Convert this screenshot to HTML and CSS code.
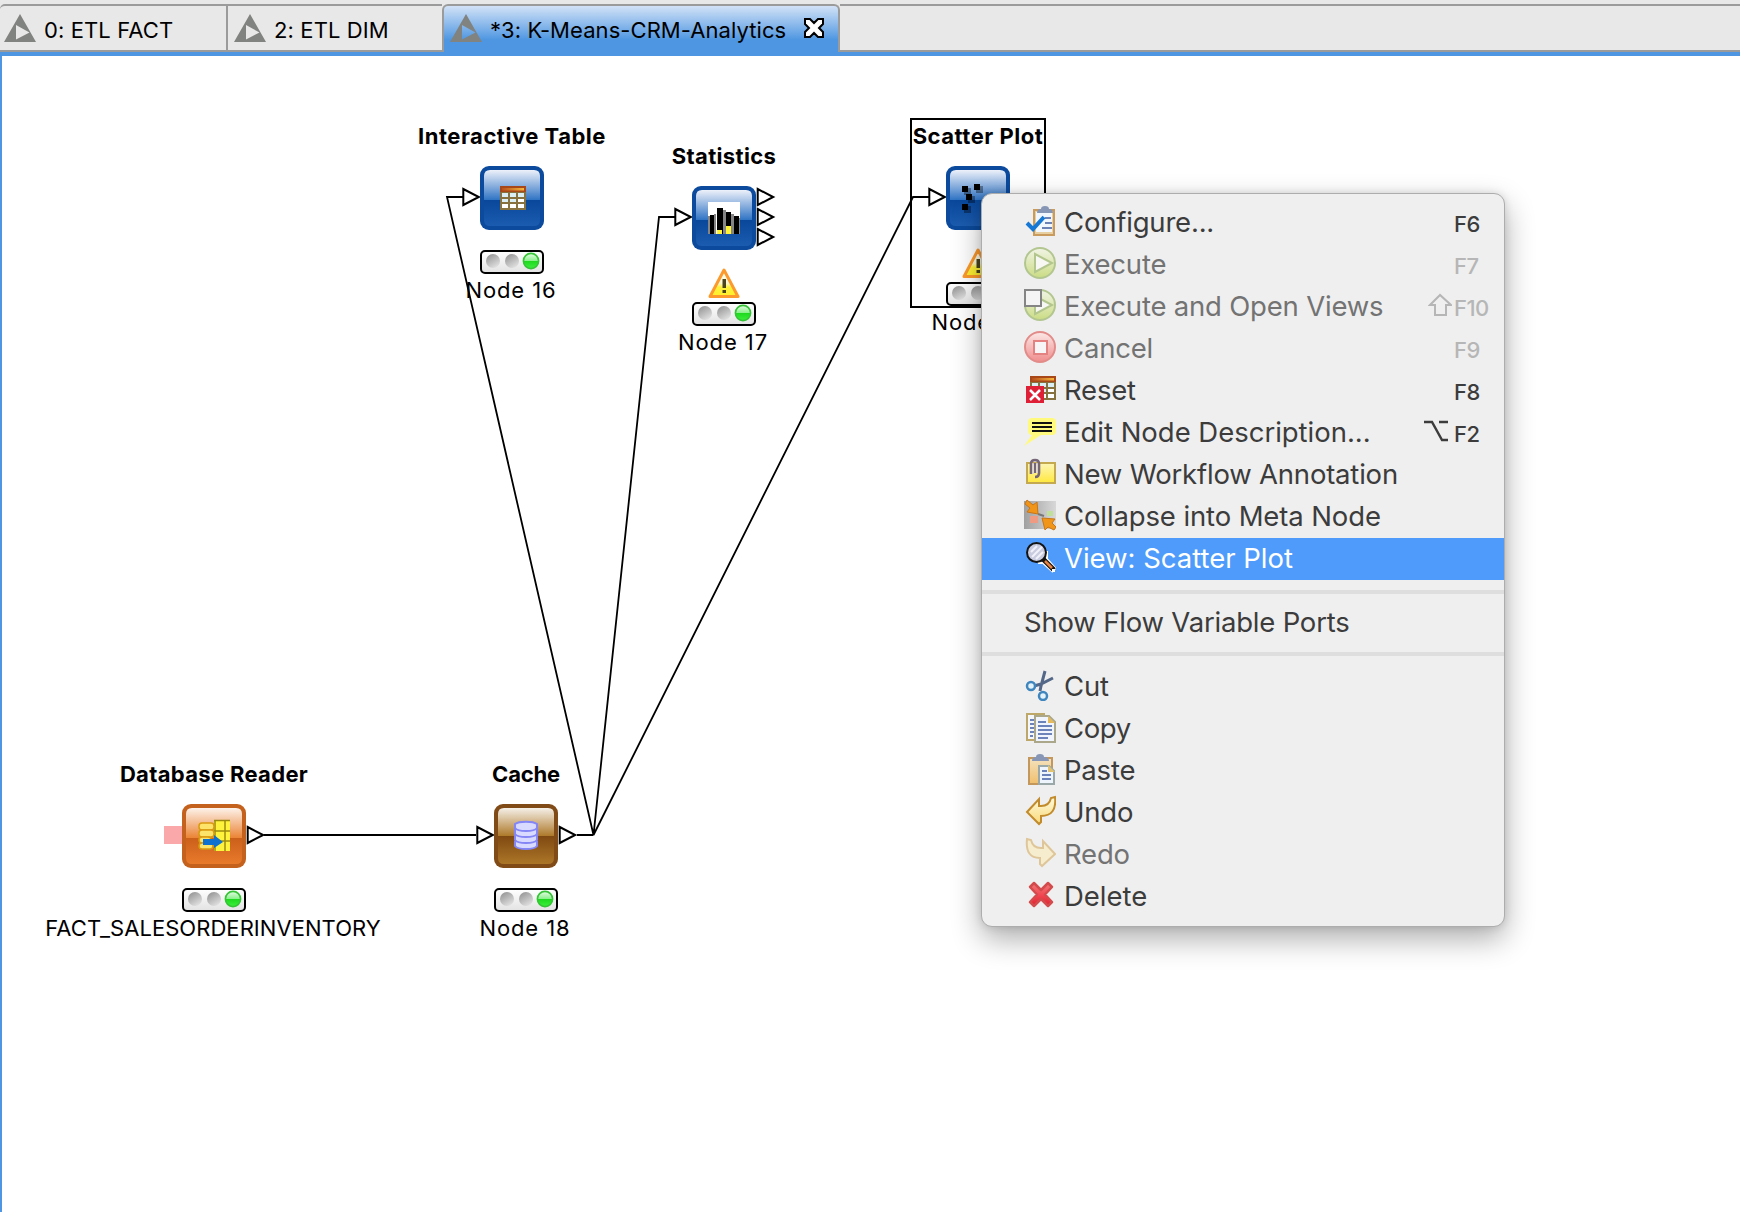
FILE: index.html
```html
<!DOCTYPE html>
<html lang="en">
<head>
<meta charset="utf-8">
<title>K-Means-CRM-Analytics</title>
<link rel="stylesheet" href="styles.css">
</head>
<body>
<svg class="defs" width="0" height="0" aria-hidden="true">
  <defs>
    <linearGradient id="blueTop" x1="0" y1="0" x2="0" y2="1"><stop offset="0" stop-color="#edf1fa"/><stop offset="1" stop-color="#2f73c4"/></linearGradient>
    <linearGradient id="blueBot" x1="0" y1="0" x2="0" y2="1"><stop offset="0" stop-color="#08479a"/><stop offset="1" stop-color="#1c5cb0"/></linearGradient>
    <linearGradient id="orangeTop" x1="0" y1="0" x2="0" y2="1"><stop offset="0" stop-color="#fdf2ea"/><stop offset="1" stop-color="#eb8334"/></linearGradient>
    <linearGradient id="orangeBot" x1="0" y1="0" x2="0" y2="1"><stop offset="0" stop-color="#cb601b"/><stop offset="1" stop-color="#e87a2b"/></linearGradient>
    <linearGradient id="brownTop" x1="0" y1="0" x2="0" y2="1"><stop offset="0" stop-color="#f5f0e8"/><stop offset="1" stop-color="#ae792a"/></linearGradient>
    <linearGradient id="brownBot" x1="0" y1="0" x2="0" y2="1"><stop offset="0" stop-color="#7f4912"/><stop offset="1" stop-color="#ac7628"/></linearGradient>
    <linearGradient id="tableHead"><stop offset="0" stop-color="#b8501c"/><stop offset="1" stop-color="#f5b73a"/></linearGradient>
    <linearGradient id="lampOff" x1="0" y1="0" x2=".6" y2="1"><stop offset="0" stop-color="#8d8d8d"/><stop offset="1" stop-color="#dedede"/></linearGradient>
    <linearGradient id="lampBox" x1="0" y1="0" x2="0" y2="1"><stop offset="0" stop-color="#fff"/><stop offset="1" stop-color="#e2e2e2"/></linearGradient>
    <linearGradient id="lampOn" x1="0" y1="0" x2="0" y2="1"><stop offset="0" stop-color="#e6fbe6"/><stop offset=".48" stop-color="#8df08d"/><stop offset=".52" stop-color="#1fd91f"/><stop offset="1" stop-color="#3df03d"/></linearGradient>
    <linearGradient id="warn" x1="0" y1="0" x2="0" y2="1"><stop offset="0" stop-color="#fff"/><stop offset=".5" stop-color="#fdf9d0"/><stop offset=".65" stop-color="#fff23a"/><stop offset="1" stop-color="#ffef2c"/></linearGradient>
    <linearGradient id="greenBall" x1="0" y1="0" x2="0" y2="1"><stop offset="0" stop-color="#f1f4e6"/><stop offset="1" stop-color="#cadc83"/></linearGradient>
    <linearGradient id="redBall" x1="0" y1="0" x2="0" y2="1"><stop offset="0" stop-color="#fbe9e7"/><stop offset="1" stop-color="#f08c8c"/></linearGradient>
    <linearGradient id="note" x1="0" y1="0" x2="0" y2="1"><stop offset="0" stop-color="#fdf6b8"/><stop offset="1" stop-color="#ffe83c"/></linearGradient>
    <linearGradient id="gold" x1="0" y1="0" x2="0" y2="1"><stop offset="0" stop-color="#fffbe0"/><stop offset="1" stop-color="#f9d978"/></linearGradient>
    <linearGradient id="board" x1="0" y1="0" x2="0" y2="1"><stop offset="0" stop-color="#f3e2bf"/><stop offset="1" stop-color="#f0bf6c"/></linearGradient>
    <linearGradient id="cross" x1="0" y1="0" x2="0" y2="1"><stop offset="0" stop-color="#f07a78"/><stop offset=".5" stop-color="#f14a55"/><stop offset="1" stop-color="#e0202e"/></linearGradient>
    <linearGradient id="meta" x1="0" y1="0" x2="1" y2="0"><stop offset="0" stop-color="#a0a0a0"/><stop offset="1" stop-color="#d8d8d8"/></linearGradient>

    <symbol id="tri" viewBox="0 0 32 28"><path fill="#80837f" fill-rule="evenodd" d="M16 0 32 28H0zM12 11v14.500L25.500 18.500z"/></symbol>
    <symbol id="lights" viewBox="0 0 64 24">
      <rect x="1" y="1" width="62" height="22" rx="4" fill="url(#lampBox)" stroke="#000" stroke-width="2"/>
      <circle cx="13" cy="11" r="7" fill="url(#lampOff)"/><circle cx="32" cy="11" r="7" fill="url(#lampOff)"/>
      <circle cx="51" cy="11" r="7.600" fill="url(#lampOn)" stroke="#35c435" stroke-width="1.600"/>
    </symbol>
    <symbol id="warning" viewBox="0 0 32 30"><path d="M16 2 30 28.500H2z" fill="url(#warn)" stroke="#fd9a2d" stroke-width="3" stroke-linejoin="round"/><path d="M14.500 11h3.500v9h-3.500zM14.500 22h3.500v3h-3.500z" fill="#4a4420"/></symbol>
    <symbol id="grid" viewBox="0 0 26 24"><path fill="#87713f" d="M0 0h26v24H0z"/><path fill="#a84718" d="M0 0h26v6H0z"/><path fill="url(#tableHead)" d="M2 2h22v2.500H2z"/><path fill="#d9eef5" d="M2 7h6v4H2zM10 7h6v4h-6zM18 7h6v4h-6zM2 13h6v3H2zM10 13h6v3h-6z"/><path fill="#fff" d="M18 13h6v3h-6zM2 18h6v4H2zM10 18h6v4h-6zM18 18h6v4h-6z"/></symbol>
  </defs>
</svg>

<header class="tabs">
  <div class="tab tab-first"><svg class="tab-icon"><use href="#tri"/></svg><span class="t0">0: ETL FACT</span></div>
  <div class="tab tab-second"><svg class="tab-icon"><use href="#tri"/></svg><span class="t1">2: ETL DIM</span></div>
  <div class="tab tab-active"><svg class="tab-icon"><use href="#tri"/></svg><span class="t2">*3: K-Means-CRM-Analytics</span>
    <svg class="tab-close" viewBox="0 0 20 20"><path d="M1 1h5l4 4 4-4h5v5l-4 4 4 4v5h-5l-4-4-4 4H1v-5l4-4-4-4z" fill="#fff" stroke="#000" stroke-width="2"/></svg></div>
  <div class="tab-rest"></div>
</header>

<main class="canvas">
  <svg class="wires" width="1738" height="1156" viewBox="2 56 1738 1156">
    <g fill="none" stroke="#000" stroke-width="2">
      <path d="M264 835H476M577 835H593.500"/>
      <path d="M593.500 835 447 197H463M593.500 835 659 217H675M593.500 835 913 197H929" stroke-width="1.800"/>
    </g>
    <path fill="#fba8aa" d="M164 826h18v18h-18z"/>
    <g fill="#fff" stroke="#000" stroke-width="2">
      <path d="M463.300 189v16l15.500-8zM675.300 209v16l15.500-8zM929.300 189v16l15.500-8zM477.300 827v16l15.500-8z"/>
      <path d="M247.700 827v16l15.500-8zM559.700 827v16l15.500-8zM757.700 189v16l15.500-8zM757.700 209v16l15.500-8zM757.700 229v16l15.500-8z"/>
    </g>
  </svg>
  <div class="selection"></div>

  <section class="node n-table">
    <h2 class="wide">Interactive Table</h2>
    <svg class="tile" viewBox="0 0 64 64"><rect width="64" height="64" rx="9" fill="#0b4a9c"/><path d="M4 34V10q0-6 6-6h44q6 0 6 6v24z" fill="url(#blueTop)"/><path d="M4 34h56v20q0 6-6 6H10q-6 0-6-6z" fill="url(#blueBot)"/><use href="#grid" x="20" y="20" width="26" height="24"/></svg>
    <svg class="lights"><use href="#lights"/></svg>
    <p>Node 16</p>
  </section>

  <section class="node n-stats">
    <h2>Statistics</h2>
    <svg class="tile" viewBox="0 0 64 64"><rect width="64" height="64" rx="9" fill="#0b4a9c"/><path d="M4 34V10q0-6 6-6h44q6 0 6 6v24z" fill="url(#blueTop)"/><path d="M4 34h56v20q0 6-6 6H10q-6 0-6-6z" fill="url(#blueBot)"/><path fill="#fff" d="M16 16h32v32H16z"/><path fill="#858585" d="M16 30h2v18h-2zM22 28h2v20h-2zM30 24h4v24h-4zM38 28h4v20h-4zM46 32h2v16h-2z"/><path d="M18 29h4v19h-4zM25 22h6v26h-6zM34 26h5v22h-5zM42 30h5v18h-5z"/><path fill="#fff335" d="M25 44h5v4h-5zM34 40h5v8h-5z"/></svg>
    <svg class="warning"><use href="#warning"/></svg>
    <svg class="lights"><use href="#lights"/></svg>
    <p>Node 17</p>
  </section>

  <section class="node n-scatter">
    <h2 class="wide">Scatter Plot</h2>
    <svg class="tile" viewBox="0 0 64 64"><rect width="64" height="64" rx="9" fill="#0b4a9c"/><path d="M4 34V10q0-6 6-6h44q6 0 6 6v24z" fill="url(#blueTop)"/><path d="M4 34h56v20q0 6-6 6H10q-6 0-6-6z" fill="url(#blueBot)"/><path fill="#000" fill-opacity=".35" d="M18 22h7v7h-7zM30 20h7v7h-7zM22 30h7v7h-7zM18 40h7v7h-7z"/><path d="M16 20h6v6h-6zM28 18h6v6h-6zM20 28h6v6h-6zM16 38h6v6h-6z"/></svg>
    <svg class="warning"><use href="#warning"/></svg>
    <svg class="lights"><use href="#lights"/></svg>
    <p>Node 19</p>
  </section>

  <section class="node n-reader">
    <h2>Database Reader</h2>
    <svg class="tile" viewBox="0 0 64 64"><rect width="64" height="64" rx="9" fill="#c4611d"/><path d="M4 34V10q0-6 6-6h44q6 0 6 6v24z" fill="url(#orangeTop)"/><path d="M4 34h56v20q0 6-6 6H10q-6 0-6-6z" fill="url(#orangeBot)"/>
      <path fill="#fff23c" d="M32 16h16v31H32z"/><path d="M33 16v31M43 16v31M32 16.500h16M32 27h16M32 37h16" stroke="#9a8a10" stroke-width="1.500"/>
      <g fill="#fde36a" stroke="#d99a10" stroke-width="1.500"><rect x="17" y="19" width="15" height="7" rx="3"/><rect x="17" y="26" width="15" height="7" rx="3"/><rect x="17" y="33" width="12" height="6" rx="3"/><rect x="17" y="39" width="14" height="6" rx="3"/></g>
      <path fill="#1070d0" d="M21 35h11v-4l9 7-9 6v-3H21z"/></svg>
    <svg class="lights"><use href="#lights"/></svg>
    <p class="caps">FACT_SALESORDERINVENTORY</p>
  </section>

  <section class="node n-cache">
    <h2 class="narrow">Cache</h2>
    <svg class="tile" viewBox="0 0 64 64"><rect width="64" height="64" rx="9" fill="#814b17"/><path d="M4 32V10q0-6 6-6h44q6 0 6 6v22z" fill="url(#brownTop)"/><path d="M4 32h56v22q0 6-6 6H10q-6 0-6-6z" fill="url(#brownBot)"/>
      <g fill="#d9daff" stroke="#8486f5" stroke-width="2"><path d="M21 37v5c3 4 19 4 22 0v-5"/><path d="M21 31v5c3 4 19 4 22 0v-5z"/><path d="M21 25v5c3 4 19 4 22 0v-5z"/><path d="M21 20v4c3 4 19 4 22 0v-4c-4-3-18-3-22 0z"/></g></svg>
    <svg class="lights"><use href="#lights"/></svg>
    <p>Node 18</p>
  </section>
</main>

<nav class="menu">
  <div class="item"><svg viewBox="0 0 32 32"><path d="M10 5h20v25H10z" fill="#e8cfa2" stroke="#c99c5e" stroke-width="2"/><path d="M12 7h16v20H12z" fill="#f2f6fd"/><path d="M21 13h6M21 18h7M18 23h10" stroke="#6e83b5" stroke-width="2"/><path d="M13 8q0-4 4-4 0-3 4-3t4 3q4 0 4 4z" fill="#8796b4"/><path d="m3 18 6 6L20 12" fill="none" stroke="#1478d4" stroke-width="4"/></svg><span>Configure...</span><kbd>F6</kbd></div>
  <div class="item off"><svg viewBox="0 0 32 32"><circle cx="16" cy="16" r="15" fill="url(#greenBall)" stroke="#b3c690" stroke-width="2"/><path d="M11 7v18l17-9z" fill="#f7f7f3" stroke="#b3c68e" stroke-width="2"/></svg><span>Execute</span><kbd>F7</kbd></div>
  <div class="item off"><svg viewBox="0 0 32 32"><circle cx="16" cy="16" r="15" fill="url(#greenBall)" stroke="#b3c690" stroke-width="2"/><path d="M11 7v18l17-9z" fill="#f7f7f3" stroke="#b3c68e" stroke-width="2"/><path d="M1 1h16v16H1z" fill="#f4f4f4" stroke="#858585" stroke-width="2"/></svg><span>Execute and Open Views</span><svg class="mod shift" viewBox="0 0 24 24"><path d="M12 2 2 12h5v10h11V12h5z" fill="none" stroke="currentColor" stroke-width="2"/></svg><kbd>F10</kbd></div>
  <div class="item off"><svg viewBox="0 0 32 32"><circle cx="16" cy="16" r="15" fill="url(#redBall)" stroke="#e28c8a" stroke-width="2"/><path d="M10 10h13v13H10z" fill="#f7f5f5" stroke="#e38280" stroke-width="2"/></svg><span>Cancel</span><kbd>F9</kbd></div>
  <div class="item"><svg viewBox="0 0 32 32"><use href="#grid" x="6" y="3" width="26" height="24"/><path fill="#de1f35" d="M2 13h18v17H2z"/><path d="m6 17 10 10M16 17 6 27" stroke="#fff" stroke-width="2.500"/></svg><span>Reset</span><kbd>F8</kbd></div>
  <div class="item loose"><svg viewBox="0 0 32 32"><path d="M8 3h20q4 0 4 4v9q0 4-4 4H17L0 31l8-11q-4 0-4-4V7q0-4 4-4z" fill="#fffa7e"/><path d="M8 8h20M8 12h20M8 16h20" stroke="#111" stroke-width="2"/></svg><span>Edit Node Description...</span><svg class="mod option" viewBox="0 0 24 22"><path d="M0 2h8l10 18h6M15 2h9" fill="none" stroke="currentColor" stroke-width="2.400"/></svg><kbd>F2</kbd></div>
  <div class="item"><svg viewBox="0 0 32 32"><path d="M3 6h28v20H3z" fill="url(#note)" stroke="#c5a950" stroke-width="2"/><path d="M7 17V7q0-4 4-4t4 4v9q0 4-4 4" fill="none" stroke="#756777" stroke-width="2.600"/><path d="M11 6v10" stroke="#756777" stroke-width="2"/><path d="M9 6v11M13 6v10" stroke="#d7d1e0" stroke-width="1.400"/></svg><span>New Workflow Annotation</span></div>
  <div class="item mid"><svg viewBox="0 0 32 32"><path d="M0 2h32v28H0z" fill="url(#meta)"/><path d="M6 17h8v7H6z" fill="#ef9a82"/><path d="M23 12h6v5h-6z" fill="#c0df9a"/><path d="m14 15 6 2" stroke="#777" stroke-width="2"/><path d="M3 1 9 6l4-3 1 12L3 13l3-4-5-4zM30 31l-6-3-3 3-3-12 13 1-3 4 4 4z" fill="#f09518" stroke="#c87516"/></svg><span>Collapse into Meta Node</span></div>
  <div class="item selected loose"><svg viewBox="0 0 32 32"><path d="M14 22h5l10 9M23 10v8l9 10" stroke="#fff" stroke-width="2" fill="none"/><circle cx="12.500" cy="11.500" r="9.500" fill="#c9cce0" stroke="#141414" stroke-width="2"/><path d="m7 11 6-6M8 16l10-10M12 18l7-7" stroke="#f1f1f8" stroke-width="2"/><path d="m19 18 11 11" stroke="#16120f" stroke-width="5"/><path d="m21 20 7 7" stroke="#e48245" stroke-width="2.500"/><path d="M28 28h3v3h-3z" fill="#fff"/></svg><span>View: Scatter Plot</span></div>
  <hr class="sep-a">
  <div class="item plain"><span>Show Flow Variable Ports</span></div>
  <hr class="sep-b">
  <div class="item mid"><svg viewBox="0 0 32 32"><path d="M21 2 17 17l-1 5M29 9 17 15l-7 2" fill="none" stroke="#536788" stroke-width="3"/><circle cx="7" cy="17" r="4" fill="#e4f2fa" stroke="#3f86bf" stroke-width="2.500"/><circle cx="19" cy="27" r="4" fill="#e4f2fa" stroke="#3f86bf" stroke-width="2.500"/></svg><span>Cut</span></div>
  <div class="item"><svg viewBox="0 0 32 32"><path d="M3 3h17v26H3z" fill="#f4f8fd" stroke="#bda869" stroke-width="2"/><path d="M6 9h4M6 13h4M6 17h4M6 21h4M6 25h3" stroke="#6c83b9" stroke-width="2"/><path d="M11 5h14l6 6v20H11z" fill="#f0f5fd" stroke="#aaa78b" stroke-width="2"/><path d="M24 5v7h7z" fill="#e5ba5d"/><path d="M14 11h8M14 15h14M14 19h14M14 23h14M14 27h10" stroke="#6c83b9" stroke-width="2"/></svg><span class="tight">Copy</span></div>
  <div class="item"><svg viewBox="0 0 32 32"><path d="M5 5h23v26H5z" fill="url(#board)" stroke="#c4985d" stroke-width="2"/><path d="M8 8q0-4 4-4 0-3 4-3t4 3q5 0 5 4z" fill="#8796b4"/><path d="M15 13h10l5 5v13H15z" fill="#eff5fd" stroke="#9ba8a8" stroke-width="2"/><path d="M24 12v7h7z" fill="#e2c26e"/><path d="M18 18h5M18 22h9M18 26h9" stroke="#6c83b9" stroke-width="2"/></svg><span>Paste</span></div>
  <div class="item"><svg viewBox="0 0 32 32"><path d="M3 17 15 4v7q10 1 12-8l4-1q2 19-14 19v6l-2 2z" fill="url(#gold)" stroke="#c28b2b" stroke-width="2"/></svg><span>Undo</span></div>
  <div class="item off"><svg viewBox="0 0 32 32"><path d="M31 17 19 4v7Q9 12 7 3L3 2q-2 19 13 19v6l2 2z" fill="#f6edcf" stroke="#dfc69a" stroke-width="2"/></svg><span>Redo</span></div>
  <div class="item loose"><svg viewBox="0 0 32 32"><path d="m6 8 4-4 7 7 7-7 4 4-7 7.500 7 7.500-4 4-7-7-7 7-4-4 7-7.500z" fill="url(#cross)" stroke="#d44b4d" stroke-width="2.500" stroke-linejoin="round"/></svg><span>Delete</span></div>
</nav>
</body>
</html>
```
FILE: styles.css
```css
* { box-sizing: border-box; }
body {
  margin: 0;
  width: 1740px;
  height: 1212px;
  overflow: hidden;
  position: relative;
  background: #fff;
  color: #000;
  font-family: Inter, "Liberation Sans", sans-serif;
}
.defs { position: absolute; }

/* editor tabs */
.tabs {
  display: flex;
  height: 56px;
  padding-top: 4px;
  background: #e8e8e8;
  border-bottom: 4px solid #4e96e1;
}
.tab, .tab-rest {
  border-top: 2px solid #9b9b9b;
  border-bottom: 2px solid #9b9b9b;
}
.tab {
  display: flex;
  align-items: flex-start;
  padding-left: 4px;
  font-size: 22px;
  line-height: 28px;
  white-space: nowrap;
}
.tab span { margin-top: 10px; }
.tab-icon { width: 32px; height: 28px; margin-top: 8px; margin-right: 8px; }
.tab-first { width: 228px; border-right: 2px solid #9b9b9b; border-top-left-radius: 5px; }
.tab-second { width: 214px; padding-left: 6px; }
.tab-active {
  width: 398px;
  padding-left: 6px;
  border: 2px solid #9b9b9b;
  border-bottom: 0;
  border-radius: 6px 6px 0 0;
  background: linear-gradient(#d2e2f7 0, #4e96e1 34px);
}
.tab-close { width: 20px; height: 20px; margin: 12px 14px 0 auto; }
.tab-rest { flex: 1; }
.t0 { letter-spacing: .1px; }
.t1 { letter-spacing: .12px; }
.t2 { letter-spacing: .07px; }

/* workflow canvas */
.canvas {
  position: relative;
  height: 1156px;
  border-left: 2px solid #4e96e1;
}
.wires { display: block; }
.selection {
  position: absolute;
  left: 908px;
  top: 62px;
  width: 136px;
  height: 190px;
  border: 2px solid #000;
}
.node {
  position: absolute;
  display: flex;
  flex-direction: column;
  align-items: center;
  width: 64px;
}
.node h2, .node p {
  margin: 0;
  font-size: 22px;
  line-height: 28px;
  white-space: nowrap;
}
.node h2 { font-weight: 700; margin-bottom: 16px; letter-spacing: .33px; }
.node h2.wide { letter-spacing: .52px; }
.node h2.narrow { letter-spacing: -.2px; }
.node p { margin-top: 2px; margin-left: -2px; letter-spacing: .9px; }
.node p.caps { letter-spacing: .05px; }
.tile { width: 64px; height: 64px; }
.lights { width: 64px; height: 24px; margin-top: 20px; }
.warning { width: 32px; height: 30px; margin-top: 18px; }
.warning + .lights { margin-top: 4px; }
.n-table { left: 478px; top: 66px; }
.n-stats { left: 690px; top: 86px; }
.n-scatter { left: 944px; top: 66px; }
.n-reader { left: 180px; top: 704px; }
.n-cache { left: 492px; top: 704px; }

/* context menu */
.menu {
  position: absolute;
  left: 981px;
  top: 193px;
  width: 524px;
  height: 734px;
  padding: 8px 0;
  border: 1px solid #adadad;
  border-radius: 11px;
  background: #efefef;
  box-shadow: 0 12px 30px rgba(0, 0, 0, .32), 0 0 8px rgba(0, 0, 0, .12);
}
.item {
  display: flex;
  align-items: flex-start;
  position: relative;
  height: 42px;
  padding: 3px 0 0 42px;
  color: #3c3c3c;
  font-size: 27.5px;
  line-height: 34px;
  letter-spacing: -.2px;
  white-space: nowrap;
}
.item.mid { letter-spacing: -.12px; }
.item.loose { letter-spacing: -.02px; }
.item .tight { letter-spacing: -.4px; }
.item > svg:first-child { width: 32px; height: 32px; margin-right: 8px; }
.item.off { color: #737373; }
.item.selected { background: #4e9bfb; color: #fff; }
.item kbd {
  position: absolute;
  left: 472px;
  top: 8px;
  font: 500 22px/28px Inter, sans-serif;
  letter-spacing: -.5px;
}
.item.off kbd, .item.off .mod { color: #b6b6b6; }
.mod { position: absolute; }
.shift { left: 446px; top: 7px; width: 24px; height: 24px; }
.option { left: 442px; top: 8px; width: 24px; height: 22px; }
hr { height: 4px; border: 0; background: #dedede; }
.sep-a { margin: 10px 0 8px; }
.sep-b { margin: 8px 0 10px; }
```
